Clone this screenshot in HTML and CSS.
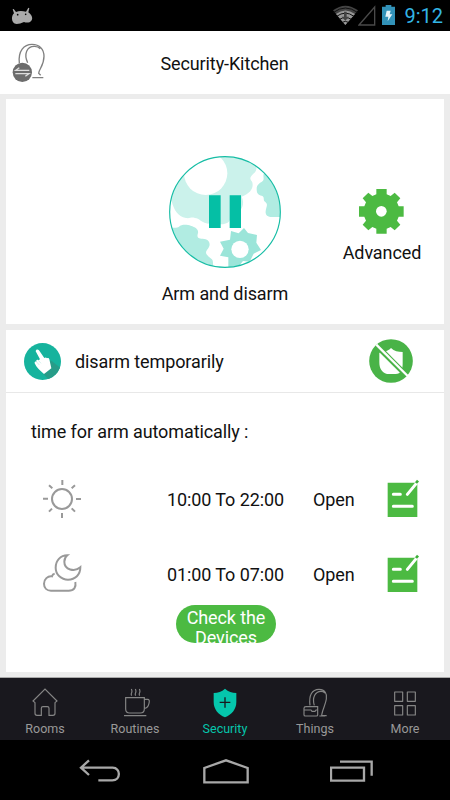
FILE: index.html
```html
<!DOCTYPE html>
<html lang="en">
	<head>
		<meta charset="utf-8">
		<title>Security-Kitchen</title>
		<link rel="stylesheet" href="styles.css">
	</head>
	<body>
		<div class="status-bar">
			<svg class="android" width="22" height="17" viewBox="0 0 66 51" fill="#aaa">
				<path d="M9 19L5 7l3-1 7 9c9-4 20-3 30-1l7-12 3 2-3 12c12 8 14 19 9 25-4 6-14 7-22 4-8 4-15 6-22 6C1 49-1 29 9 19z"/>
				<circle cx="20" cy="23" r="2.5" fill="#000"/>
				<circle cx="44" cy="22" r="2.5" fill="#000"/>
			</svg>
			<div class="status-icons">
				<svg width="25" height="20" viewBox="0 0 75 60">
					<path d="M0 16Q37-12 75 16L37 60z" fill="#444"/>
					<path d="M9 27Q37 6 66 27L37 60z" fill="#999"/>
					<path d="M2 22Q37-4 73 22M11 34Q37 15 63 34M20 43Q37 32 55 43M28 52Q37 46 46 52" fill="none" stroke="#111" stroke-width="3"/>
					<path d="M33 20h8v15h7L37 47 26 35h7z" fill="#444"/>
				</svg>
				<svg width="18" height="21" viewBox="0 0 54 63">
					<path d="M3 60L50 6v54z" fill="none" stroke="#4a4a4a" stroke-width="4"/>
				</svg>
				<svg class="battery" width="13" height="20" viewBox="0 0 39 60">
					<path d="M0 5h11V0h17v5h11v55H0z" fill="#3292b8"/>
					<path d="M14 17h12l-3 11h8L17 49l2-14h-9z" fill="#e8f5fa"/>
				</svg>
				<span class="clock">9:12</span>
			</div>
		</div>

		<header class="header">
			<svg class="header-icon" width="34" height="40" viewBox="0 0 102 120">
				<path d="M22 60C18 24 36 4 60 4c24 0 36 16 36 36 0 29-16 39-16 51l6 6M47 59C35 34 44 9 68 10c8 0 13 3 17 7M61 104h33" fill="none" stroke="#808080" stroke-width="4"/>
				<circle cx="31" cy="88" r="29" fill="#6c6c6c"/>
				<path d="M52 82H11l11-8M10 92h41l-11 8" fill="none" stroke="#ddd" stroke-width="4"/>
			</svg>
			<h1>Security-Kitchen</h1>
		</header>

		<main>
			<section class="card arm-card">
				<div class="arm">
					<svg width="112" height="112" viewBox="0 0 336 336">
						<clipPath id="disc"><circle cx="168" cy="168" r="166"/></clipPath>
						<g clip-path="url(#disc)">
							<path d="M0 0H250L262 36C264 51 244 56 244 68C246 75 251 75 251 86C251 100 241 113 218 122C229 145 218 168 194 173C184 176 186 188 181 195C172 211 123 205 112 202C97 199 91 187 78 186C66 182 64 188 51 186C26 182 15 162 8 136L0 130z" fill="#cbf2eb"/>
							<circle cx="110" cy="52" r="65" fill="#fff"/>
							<path d="M290 48C277 52 288 69 282 74C276 80 263 83 263 99C263 113 268 117 278 119C289 122 280 132 289 138C298 145 292 152 290 165C288 180 300 184 312 183H336V48z" fill="#b1ece2"/>
							<path d="M0 216C15 214 23 217 30 212C37 204 55 205 65 209C82 214 91 222 86 235C82 251 98 247 110 250C124 254 126 270 114 282C106 292 116 299 125 307C137 315 128 325 136 336H0z" fill="#b1ece2"/>
							<path d="M186 225L209 232L225 216L237 231L264 237L262 260L276 282L254 293L242 317L222 315L202 340L178 336V304L153 299L164 278L153 257L183 251z" fill="#9be5d9"/>
							<circle cx="213" cy="280" r="26" fill="#fff"/>
						</g>
						<path d="M120 118h35v98h-35zM182 118h34v98h-34z" fill="#05bfa5"/>
						<circle cx="168" cy="168" r="166" fill="none" stroke="#17bda5" stroke-width="3.5"/>
					</svg>
					<span class="arm-label">Arm and disarm</span>
				</div>
				<div class="advanced">
					<svg width="45" height="45" viewBox="0 0 135 135">
						<path d="M52 0h31v16l12 5 12-10 17 17-10 12 5 12h15v31h-15l-5 12 10 12-17 17-12-10-12 5v15H52v-15l-12-5-12 10-17-17 10-12-5-12H0V52h16l5-12-10-12 17-17 12 10 12-5z" fill="#4cba42"/>
						<circle cx="67" cy="67" r="16" fill="#fff"/>
					</svg>
					<span class="advanced-label">Advanced</span>
				</div>
			</section>

			<section class="card">
				<div class="disarm-row">
					<svg width="37" height="37" viewBox="0 0 111 111">
						<clipPath id="hand-disc"><circle cx="55.5" cy="55.5" r="55.5"/></clipPath>
						<circle cx="55.5" cy="55.5" r="55.5" fill="#16b39d"/>
						<path d="M80 52L130 90V130H95L58 93z" fill="#279c88" clip-path="url(#hand-disc)"/>
						<path d="M35 25c1-6 6-7 10-3l16 23c3-3 6-2 8 1 3-2 6 0 7 3l6 27-22 17c-11-9-23-19-28-32-1-5 3-7 6-4-3-6 1-8 5-5l5-3z" fill="#fff"/>
						<path d="M38 57l8 9M43 52l8 9" stroke="#bee9e2" stroke-width="2"/>
					</svg>
					<span class="disarm-label">disarm temporarily</span>
					<svg width="44" height="44" viewBox="0 0 132 132">
						<circle cx="66" cy="66" r="65.5" fill="#49b347"/>
						<path d="M31 41c14-2 25-4 35-14 9 9 22 12 35 12v35c0 17-5 31-21 31H54C37 99 31 88 31 69z" fill="#fff"/>
						<path d="M30 27L104 101" stroke="#49b347" stroke-width="16"/>
						<path d="M22 17L116 111" stroke="#fff" stroke-width="7"/>
					</svg>
				</div>
				<div class="schedule">
					<h2>time for arm automatically :</h2>
					<div class="time-row">
						<svg width="40" height="40" viewBox="0 0 120 120" fill="none" stroke="#999" stroke-width="6">
							<circle cx="60" cy="60" r="30"/>
							<path d="M61 3v15M60 102v15M3 59h15M102 60h15M21 19l10 9M99 19l-10 9M21 98l9-9M99 98l-10-10"/>
						</svg>
						<span class="time">10:00 To 22:00</span>
						<span class="state">Open</span>
						<svg width="33" height="39" viewBox="0 0 99 117">
							<path d="M2 11h89v103H2z" fill="#4cba42"/>
							<path d="M19 46h21M19 82h57M61 46L90 11" fill="none" stroke="#fff" stroke-width="9" stroke-linecap="round"/>
							<path d="M87 12l6-7" stroke="#3caf38" stroke-width="8"/>
						</svg>
					</div>
					<div class="time-row">
						<svg width="40" height="40" viewBox="0 0 120 120" fill="none" stroke="#999" stroke-width="6">
							<path d="M76 4C55 4 41 20 41 41c0 21 17 36 37 36 22 0 37-15 37-37-17 15-48 8-48-17 0-10 4-15 9-19z"/>
							<path d="M38 59c-6 1-7 4-8 8C17 65 6 76 6 89c0 13 9 21 21 21h53c16 0 23-10 20-26"/>
						</svg>
						<span class="time">01:00 To 07:00</span>
						<span class="state">Open</span>
						<svg width="33" height="39" viewBox="0 0 99 117">
							<path d="M2 11h89v103H2z" fill="#4cba42"/>
							<path d="M19 46h21M19 82h57M61 46L90 11" fill="none" stroke="#fff" stroke-width="9" stroke-linecap="round"/>
							<path d="M87 12l6-7" stroke="#3caf38" stroke-width="8"/>
						</svg>
					</div>
					<a class="check">Check the Devices</a>
				</div>
			</section>
		</main>

		<nav class="tabs">
			<a class="tab">
				<svg width="30" height="32" viewBox="0 0 90 96">
					<path d="M15 47L9 42 45 6l36 36-6 5v32q0 6-6 6H57V64q0-5-5-5H39q-5 0-5 5v21H21q-6 0-6-6z"/>
				</svg>
				Rooms
			</a>
			<a class="tab">
				<svg width="30" height="32" viewBox="0 0 90 96">
					<path d="M17 32h56v34q0 12-12 12H29q-12 0-12-12zM73 37h10q7 0 4 12-3 14-14 15M12 86h67M35 26c-5-8 5-9-1-20M47 26c-5-8 5-9-1-20M59 26c-5-8 5-9-1-20"/>
				</svg>
				Routines
			</a>
			<a class="tab active">
				<svg width="30" height="32" viewBox="0 0 90 96">
					<path class="shield" d="M45 5c10 9 21 13 34 13v27c0 22-14 38-34 46-20-8-34-24-34-46V18c13 0 24-4 34-13z"/>
					<path class="plus" d="M45 31v31M29 46h32"/>
				</svg>
				Security
			</a>
			<a class="tab">
				<svg width="30" height="32" viewBox="0 0 90 96">
					<path d="M30 55C26 25 36 7 57 7c18 0 25 14 22 29-2 17-13 34-14 50h15M43 55C36 33 45 13 63 13c5 0 9 2 12 5M18 59h35v25q0 3-4 3H16q-4 0-4-4V64q0-5 6-5zM12 69h21l3 4h9l3-4h5M58 87h17"/>
				</svg>
				Things
			</a>
			<a class="tab">
				<svg width="30" height="32" viewBox="0 0 90 96">
					<path stroke-linejoin="round" d="M14 15h24v28H14zM52 15h24v28H52zM14 56h24v28H14zM52 56h24v28H52z"/>
				</svg>
				More
			</a>
		</nav>

		<div class="nav-bar">
			<svg width="42" height="24" viewBox="0 0 126 72">
				<path d="M5 26h96c25 0 25 38-1 38H58M30 4L6 26l24 22"/>
			</svg>
			<svg width="46" height="26" viewBox="0 0 138 78">
				<path d="M4 73V30L69 7l65 23v43z"/>
			</svg>
			<svg width="43" height="24" viewBox="0 0 129 72">
				<path d="M3 26h99v39H3zM30 8h95v42"/>
			</svg>
		</div>
	</body>
</html>
```
FILE: styles.css
```css
* {
	box-sizing: border-box;
}
body {
	margin: 0;
	width: 450px;
	height: 800px;
	display: flex;
	flex-direction: column;
	overflow: hidden;
	background: #ececec;
	color: #111;
	font: 18px/22px Roboto, sans-serif;
	letter-spacing: -0.1px;
}
svg {
	display: block;
	flex: none;
}
h1,
h2 {
	margin: 0;
	font-size: 18px;
	font-weight: 400;
}
.status-bar {
	height: 31px;
	flex: none;
	display: flex;
	justify-content: space-between;
	padding: 5px 7px 0 11px;
	background: #000;
}
.android {
	margin-top: 2px;
}
.status-icons {
	display: flex;
}
.battery {
	margin: 0 9px 0 6px;
}
.clock {
	color: #33b5e5;
	font-size: 20px;
	letter-spacing: 0;
}
.header {
	height: 63px;
	flex: none;
	display: flex;
	align-items: center;
	padding: 0 12px;
	background: #fff;
}
.header h1 {
	flex: 1;
	padding: 2px 35px 0 0;
	text-align: center;
}
main {
	height: 584px;
	flex: none;
	display: flex;
	flex-direction: column;
	gap: 6px;
	padding: 5px 6px;
	border-bottom: 1px solid #aaa;
}
.card {
	background: #fff;
}
.arm-card {
	height: 225px;
	flex: none;
	display: flex;
	padding-left: 133px;
}
.card:last-child {
	flex: 1;
}
.arm {
	width: 172px;
	display: flex;
	flex-direction: column;
	align-items: center;
	gap: 15px;
	padding: 57px 0 0 6px;
}
.arm-label {
	margin-left: -1px;
}
.advanced {
	width: 142px;
	display: flex;
	flex-direction: column;
	align-items: center;
	gap: 8px;
	padding: 90px 0 0 14px;
}
.disarm-row {
	height: 63px;
	display: flex;
	align-items: center;
	padding: 0 31px 0 18px;
	border-bottom: 1px solid #e8e8e8;
}
.disarm-label {
	flex: 1;
	padding: 2px 0 0 14px;
}
.schedule {
	padding: 28px 24px 0;
}
.schedule h2 {
	margin-bottom: 36px;
	padding-left: 1px;
}
.time-row {
	height: 40px;
	display: grid;
	grid-template-columns: 136px 146px 74px 33px;
	align-items: center;
	margin-bottom: 35px;
	padding-left: 12px;
}
.time-row + .time-row {
	margin-bottom: 11px;
}
.time,
.state {
	margin-left: -11px;
	padding-top: 2px;
}
.time-row svg:last-child {
	margin: -2px 0 0 -11px;
}
.check {
	display: block;
	width: 100px;
	height: 38px;
	margin-left: 146px;
	padding: 3px 5px 0;
	overflow: hidden;
	border-radius: 19px;
	background: #4cba42;
	color: #fff;
	line-height: 20px;
	text-align: center;
}
.tabs {
	height: 62px;
	flex: none;
	display: flex;
	background: #19181e;
}
.tab {
	flex: 1;
	display: flex;
	flex-direction: column;
	align-items: center;
	gap: 2px;
	padding-top: 9px;
	color: #999;
	font-size: 12.5px;
	line-height: 15px;
	letter-spacing: 0;
}
.tab path {
	fill: none;
	stroke: #858585;
	stroke-width: 3.5;
}
.tab.active {
	color: #05c6ac;
}
.tab .shield {
	fill: #05c6ac;
	stroke: none;
}
.tab .plus {
	stroke: #19181e;
	stroke-width: 4;
}
.nav-bar {
	flex: 1;
	display: flex;
	justify-content: space-between;
	align-items: center;
	padding: 2px 77px 0 79px;
	background: #000;
}
.nav-bar path {
	fill: none;
	stroke: #a8a8a8;
	stroke-width: 7;
}
```
